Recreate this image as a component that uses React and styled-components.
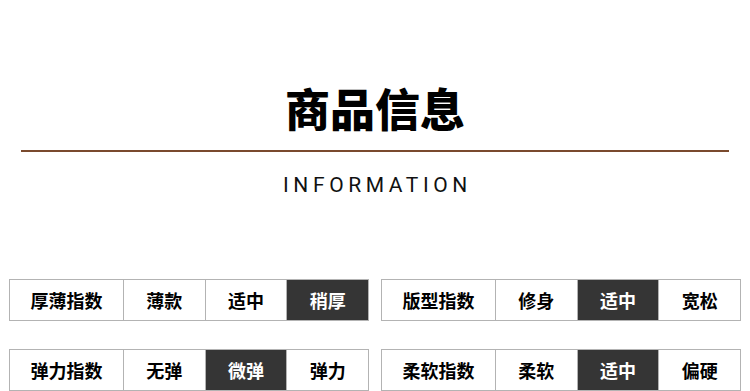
import React from 'react';
import styled, { createGlobalStyle } from 'styled-components';

const GlobalStyle = createGlobalStyle`
  html, body {
    margin: 0;
    padding: 0;
    background: #ffffff;
  }
  body {
    width: 750px;
    height: 391px;
    overflow: hidden;
    font-family: "Noto Sans CJK SC", "Noto Sans", sans-serif;
  }
`;

const Page = styled.div`
  width: 750px;
  padding-top: 85px;
  box-sizing: border-box;
`;

const Header = styled.header`
  display: flex;
  flex-direction: column;
  align-items: center;
`;

const Title = styled.h1`
  margin: 0;
  font-family: "Noto Sans CJK SC", sans-serif;
  font-size: 45px;
  font-weight: 900;
  line-height: 1;
  color: #000;
  letter-spacing: 0;
`;

const Divider = styled.div`
  width: 708px;
  height: 2px;
  margin-top: 20px;
  background: #7a4a2e;
`;

const Subtitle = styled.h2`
  margin: 23px 0 0;
  padding-left: 5px;
  font-family: Roboto, "Liberation Sans", sans-serif;
  font-size: 21px;
  font-weight: 400;
  line-height: 1;
  letter-spacing: 4.6px;
  color: #111;
`;

const TableGrid = styled.div`
  display: grid;
  grid-template-columns: 360px 360px;
  column-gap: 12px;
  row-gap: 28px;
  padding: 0 9px;
  margin-top: 83px;
`;

const Table = styled.div`
  display: grid;
  grid-template-columns: 113px 1fr 1fr 1fr;
  height: 42px;
  border: 1px solid #b3b3b3;
  box-sizing: border-box;
`;

const Cell = styled.div`
  display: flex;
  align-items: center;
  justify-content: center;
  border-left: ${(p) => (p.$first ? 'none' : '1px solid #b3b3b3')};
  background: ${(p) => (p.$active ? '#353535' : '#fff')};
  color: ${(p) => (p.$active ? '#fff' : '#000')};
  font-size: 18px;
  font-weight: 700;
  line-height: 1;
`;

const rows = [
  { label: '厚薄指数', options: ['薄款', '适中', '稍厚'], active: 2 },
  { label: '版型指数', options: ['修身', '适中', '宽松'], active: 1 },
  { label: '弹力指数', options: ['无弹', '微弹', '弹力'], active: 1 },
  { label: '柔软指数', options: ['柔软', '适中', '偏硬'], active: 1 },
];

const App = () => {
  return (
    <Page>
      <GlobalStyle />
      <Header>
        <Title>商品信息</Title>
        <Divider />
        <Subtitle>INFORMATION</Subtitle>
      </Header>
      <TableGrid>
        {rows.map((row) => (
          <Table key={row.label}>
            <Cell $first>{row.label}</Cell>
            {row.options.map((opt, i) => (
              <Cell key={opt} $active={i === row.active}>
                {opt}
              </Cell>
            ))}
          </Table>
        ))}
      </TableGrid>
    </Page>
  );
};

export default App;
